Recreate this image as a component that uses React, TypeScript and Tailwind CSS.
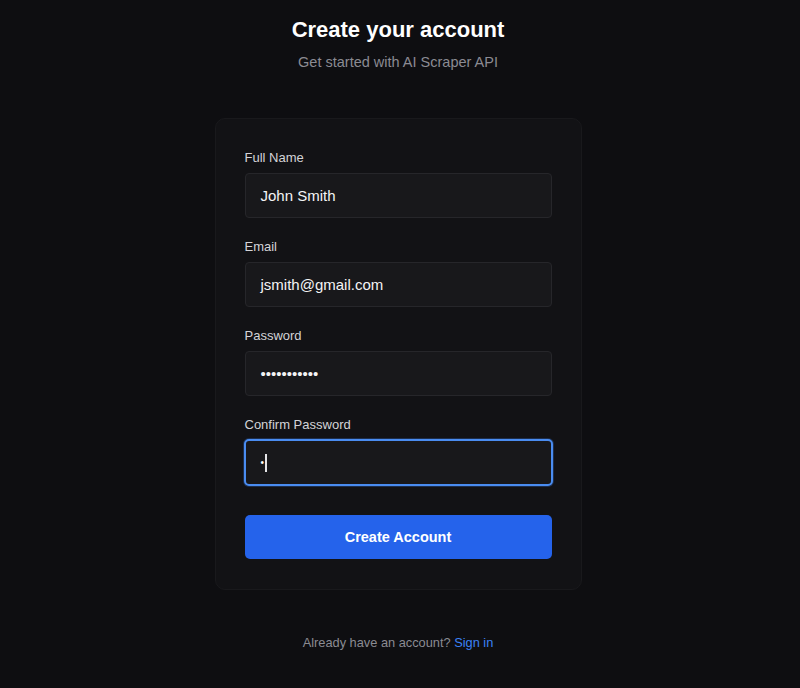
import React from "react";

const font = { fontFamily: '"Liberation Sans", Arial, sans-serif' };

function Field({ label, children, focused = false }: { label: string; children: React.ReactNode; focused?: boolean }) {
  return (
    <div className="flex flex-col">
      <div className="pt-[1px] text-[13px] leading-[19px] text-[#d4d4d8]">{label}</div>
      <div
        className={
          focused
            ? "mt-[5px] h-[47px] -mx-[1px] flex items-center rounded-[5px] border-2 border-[#4a8cf0] bg-[#18181b] pl-[15px] pt-[1px] text-[15px] text-white shadow-[0_0_0_1px_rgba(59,130,246,0.25)]"
            : "mt-[6px] h-[45px] flex items-center rounded-[4px] border border-[#26262a] bg-[#18181b] pl-[15px] pt-[1px] text-[15px] text-[#f4f4f5]"
        }
      >
        {children}
      </div>
    </div>
  );
}

export default function App() {
  return (
    <div style={font} className="min-h-[688px] w-full bg-[#0e0e11] flex flex-col items-center pr-[4px]">
      <h1 className="mt-[16px] text-[22px] leading-[28px] font-bold text-white">Create your account</h1>
      <p className="mt-[8px] text-[14.5px] leading-[20px] text-[#8b8b93]">Get started with AI Scraper API</p>

      <div className="mt-[46px] w-[367px] rounded-[10px] border border-[#19191c] bg-[#121215] px-[29px] pt-[28px] pb-[30px]">
        <div className="flex flex-col gap-[18px]">
          <Field label="Full Name">John Smith</Field>
          <Field label="Email">jsmith@gmail.com</Field>
          <Field label="Password">
            <span className="text-[15px] tracking-[0px]">•••••••••••</span>
          </Field>
          <Field label="Confirm Password" focused>
            <span className="flex items-center">
              <span className="text-[10px] leading-none">•</span>
              <span className="ml-[1px] inline-block h-[18px] w-[1.5px] bg-[#e4e4e7]" />
            </span>
          </Field>
        </div>
        <button className="mt-[29px] h-[44px] w-full rounded-[5px] bg-[#2563eb] pt-[1px] text-[14.5px] font-bold text-white">
          Create Account
        </button>
      </div>

      <p className="mt-[43px] text-[12.8px] leading-[20px] text-[#8b8b93]">
        Already have an account? <span className="text-[#3b82f6]">Sign in</span>
      </p>
    </div>
  );
}
